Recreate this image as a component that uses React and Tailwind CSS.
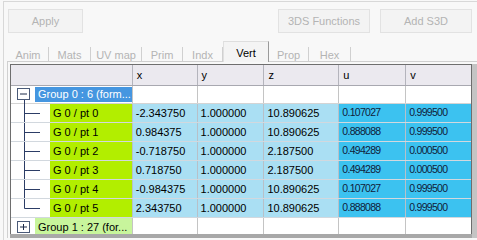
import React from "react";

const rows = [
  ["G 0 / pt 0", "-2.343750", "1.000000", "10.890625", "0.107027", "0.999500"],
  ["G 0 / pt 1", "0.984375", "1.000000", "10.890625", "0.888088", "0.999500"],
  ["G 0 / pt 2", "-0.718750", "1.000000", "2.187500", "0.494289", "0.000500"],
  ["G 0 / pt 3", "0.718750", "1.000000", "2.187500", "0.494289", "0.000500"],
  ["G 0 / pt 4", "-0.984375", "1.000000", "10.890625", "0.107027", "0.999500"],
  ["G 0 / pt 5", "2.343750", "1.000000", "10.890625", "0.888088", "0.999500"],
];

const tabs = [
  { label: "Anim", w: "w-[41px]" },
  { label: "Mats", w: "w-[42px]" },
  { label: "UV map", w: "w-[51px]" },
  { label: "Prim", w: "w-[41px]" },
  { label: "Indx", w: "w-[40px]" },
  { label: "Vert", w: "w-[46px]", active: true },
  { label: "Prop", w: "w-[40px]" },
  { label: "Hex", w: "w-[42px]" },
];

const Button = ({ children, className }) => (
  <div
    className={[
      "flex h-[24px] items-center justify-center border border-[#e2e2e2] bg-[#f3f3f3] text-[11px] text-[#b4b4b4]",
      className,
    ].join(" ")}
  >
    {children}
  </div>
);

const Box = ({ open }) => (
  <svg width="13" height="12" viewBox="0 0 13 12" className="shrink-0">
    <rect x="0.5" y="0.5" width="12" height="11" fill="#ffffff" stroke="#4a5a78" />
    <line x1="3" y1="6" x2="10" y2="6" stroke="#1c2a48" />
    {!open && <line x1="6.5" y1="3" x2="6.5" y2="9" stroke="#1c2a48" />}
  </svg>
);

const Connector = ({ last }) => (
  <svg width="39" height="18" viewBox="0 0 39 18" className="shrink-0">
    <line x1="13.5" y1="0" x2="13.5" y2={last ? 9.5 : 18} stroke="#2c3d66" />
    <line x1="13.5" y1="9.5" x2="29" y2="9.5" stroke="#2c3d66" />
  </svg>
);

const cols = ["w-[65px]", "w-[67px]", "w-[75px]", "w-[67px]", "w-[65px]"];

export default function App() {
  return (
    <div className="h-[240px] w-[477px] overflow-hidden bg-[#f8f8f8] font-['Liberation_Sans',Arial,sans-serif]">
      <div className="ml-[3px] mt-[1px] h-[239px] border-l border-t border-[#d8d8d8]">
        {/* buttons */}
        <div className="flex pt-[7px] pl-[4px] pr-[5px]">
          <Button className="w-[75px]">Apply</Button>
          <Button className="ml-auto w-[92px]">3DS Functions</Button>
          <Button className="ml-[10px] w-[92px]">Add S3D</Button>
        </div>

        {/* tabs */}
        <div className="mt-[8px] flex h-[21px] items-end pl-[3px]">
          <div className="h-[16px] w-[1px] border-b border-[#cfcfcf]" />
          {tabs.map((t) =>
            t.active ? (
              <div
                key={t.label}
                className={[
                  "flex h-[21px] items-start justify-center border-l border-t border-r border-l-[#e0e0e0] border-t-[#dedede] border-r-[#9a9a9a] bg-[#f4f4f4] pt-[3px] text-[11px] text-black",
                  t.w,
                ].join(" ")}
              >
                {t.label}
              </div>
            ) : (
              <div
                key={t.label}
                className={[
                  "flex h-[16px] items-start justify-center border-b border-b-[#cfcfcf] text-[11px] text-[#b4b4b4]",
                  t.w,
                ].join(" ")}
              >
                <span className="flex-1 pt-[1px] text-center">{t.label}</span>
                <span className="mt-[1px] h-[14px] w-[1px] bg-[#d0d0d0]" />
              </div>
            )
          )}
          <div className="h-[16px] flex-1 border-b border-[#cfcfcf]" />
        </div>

        {/* panel */}
        <div className="ml-[3px] flex h-[176px] border-l border-[#d0d0d0]">
          <div className="ml-[2px] mt-[2px] flex flex-col">
            <div className="flex h-[172px] w-[462px] flex-col overflow-hidden border-l border-t border-r border-[#6e6e6e] bg-white text-[11px] text-black">
              {/* header */}
              <div className="flex h-[21px] shrink-0 border-b border-[#a8a8b0] bg-[#ebe9ef]">
                <div className="w-[122px] border-r border-[#b4b4bc]" />
                {["x", "y", "z", "u", "v"].map((h, i) => (
                  <div
                    key={h}
                    className={[
                      "flex items-center border-r border-[#b4b4bc] pl-[4px]",
                      cols[i],
                      i === 4 ? "border-r-0" : "",
                    ].join(" ")}
                  >
                    {h}
                  </div>
                ))}
              </div>

              {/* group 0 */}
              <div className="flex h-[18px] shrink-0 border-b border-[#d4d4d4]">
                <div className="flex w-[122px] border-r border-[#c4c4c4]">
                  <div className="relative w-[24px] shrink-0">
                    <div className="absolute left-[6px] top-[2px]">
                      <Box open />
                    </div>
                    <div className="absolute left-[13px] top-[14px] h-[4px] w-px bg-[#2c3d66]" />
                  </div>
                  <div className="my-[1px] flex flex-1 items-center truncate bg-[#4596e0] pl-[3px] text-white">
                    Group 0 : 6 (form...
                  </div>
                </div>
                {cols.map((c, i) => (
                  <div key={i} className={[c, i === 4 ? "" : "border-r border-[#c4c4c4]"].join(" ")} />
                ))}
              </div>

              {/* points */}
              {rows.map((r, ri) => (
                <div key={ri} className="flex h-[19px] shrink-0 border-b border-[#d2d8de]">
                  <div className="flex w-[122px] border-r border-[#b8c0c8]">
                    <Connector last={ri === rows.length - 1} />
                    <div className="flex flex-1 items-center bg-[#b2ee00] pl-[3px]">{r[0]}</div>
                  </div>
                  {r.slice(1).map((v, i) => (
                    <div
                      key={i}
                      className={[
                        "flex items-center pl-[3px]",
                        cols[i],
                        i < 3
                          ? "border-r border-[#b8c0c8] bg-[#aadff3]"
                          : "bg-[#3cc2f0] text-[10.5px] tracking-[-0.7px] text-[#10203a]",
                        i === 3 ? "border-r border-[#b8c0c8]" : "",
                      ].join(" ")}
                    >
                      {v}
                    </div>
                  ))}
                </div>
              ))}

              {/* group 1 */}
              <div className="flex h-[19px] shrink-0">
                <div className="flex w-[122px] border-r border-[#c4c4c4]">
                  <div className="relative w-[24px] shrink-0">
                    <div className="absolute left-[6px] top-[3px]">
                      <Box />
                    </div>
                  </div>
                  <div className="flex flex-1 items-center truncate bg-[#c8f59c] pl-[3px]">
                    Group 1 : 27 (for...
                  </div>
                </div>
                {cols.map((c, i) => (
                  <div key={i} className={[c, i === 4 ? "" : "border-r border-[#c4c4c4]"].join(" ")} />
                ))}
              </div>
            </div>
            <div className="h-[4px] w-[462px] bg-[#a8a8a8]" />
          </div>
          <div className="mt-[2px] flex-1 bg-[#c4c4c4]" />
        </div>
      </div>
    </div>
  );
}
